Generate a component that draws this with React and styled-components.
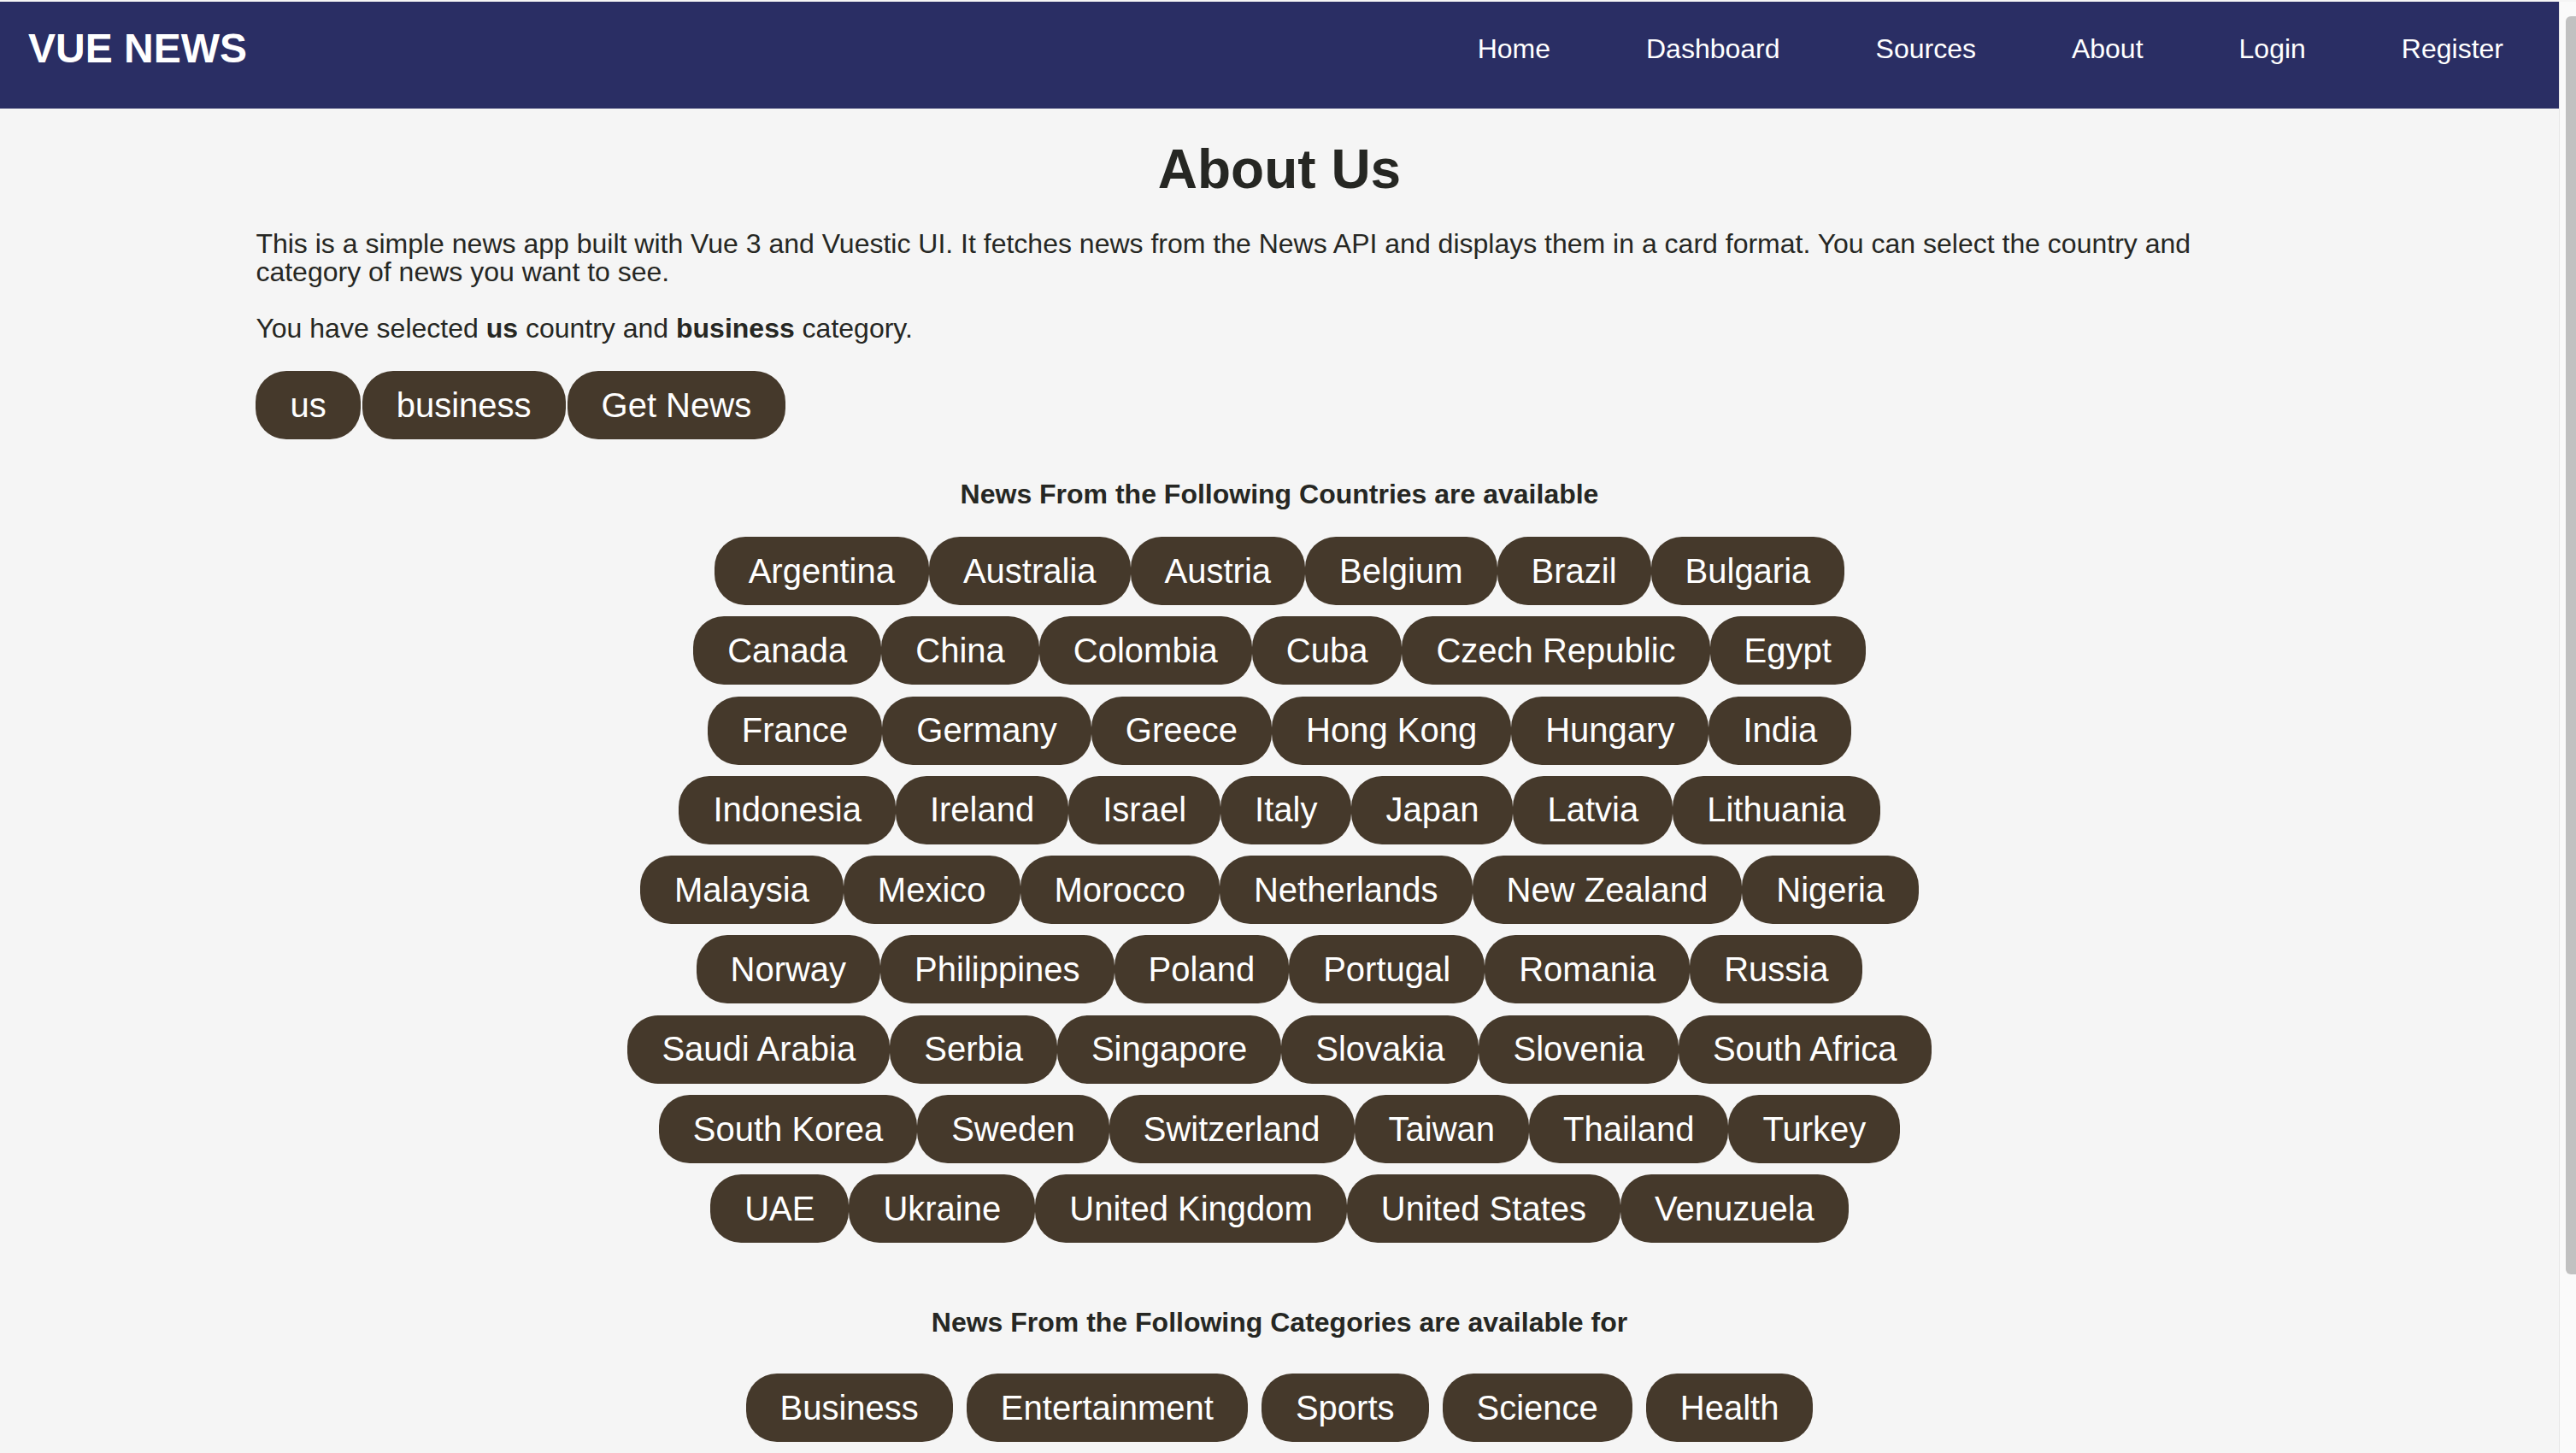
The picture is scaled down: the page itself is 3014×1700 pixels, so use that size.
import React from 'react';
import styled, { createGlobalStyle } from 'styled-components';

const GlobalStyle = createGlobalStyle`
  html {
    background: #f5f5f5;
  }
  body {
    margin: 0;
    padding-top: 2px;
    background: #f5f5f5;
    font-family: "Liberation Sans", Arial, Helvetica, sans-serif;
    color: #262723;
    overflow: hidden;
  }
`;

const Viewport = styled.div`
  display: flex;
  height: calc(100vh - 2px);
  overflow: hidden;
`;

const Page = styled.div`
  flex: 1;
  min-width: 0;
  overflow: hidden;
`;

// window scrollbar, as it shows on the capture
const ScrollRail = styled.div`
  flex: 0 0 20px;
  box-sizing: border-box;
  padding: 17px 0 0 7px;
  background: #fafafa;
  border-left: 1px solid #e6e6e6;
`;

const ScrollThumb = styled.div`
  height: 1472px;
  background: #c1c1c1;
  border-radius: 6px 0 0 6px;
`;

const NavBar = styled.nav`
  display: flex;
  align-items: center;
  justify-content: space-between;
  height: 125px;
  box-sizing: border-box;
  padding: 0 65px 16px 33px;
  background: #2a2e64;
`;

const Brand = styled.div`
  font-size: 48px;
  font-weight: 700;
  line-height: 1;
  color: #fff;
`;

const NavLinks = styled.ul`
  display: flex;
  gap: 112px;
  list-style: none;
  margin: 0;
  padding: 0;
`;

const NavLink = styled.a`
  font-size: 32px;
  line-height: 1;
  color: #fff;
  text-decoration: none;
`;

const Main = styled.main`
  width: 80%;
  margin: 0 auto;
  padding: 39px 0 250px;
`;

const Title = styled.h1`
  margin: 0 0 39px;
  font-size: 64px;
  font-weight: 700;
  line-height: 1;
  text-align: center;
`;

const Text = styled.p`
  margin: 0 0 33px;
  font-size: 32px;
  line-height: 33px;
`;

const PillRow = styled.div`
  display: flex;
  justify-content: ${(p) => (p.$center ? 'center' : 'flex-start')};
  gap: ${(p) => p.$gap || 0}px;
  margin-top: ${(p) => p.$top || 0}px;
`;

const Pill = styled.button`
  display: inline-flex;
  align-items: center;
  height: 80px;
  padding: 0 40px;
  border: none;
  border-radius: 36px;
  background: #45392b;
  color: #fff;
  font-family: inherit;
  font-size: 40px;
  white-space: nowrap;
  cursor: pointer;
`;

const SectionTitle = styled.h4`
  margin: ${(p) => p.$top}px 0 0;
  font-size: 32px;
  font-weight: 700;
  line-height: 1;
  text-align: center;
`;

const ChipGrid = styled.div`
  display: flex;
  flex-direction: column;
  gap: 13.3px;
  margin-top: 34px;
`;

const countryRows = [
  ['Argentina', 'Australia', 'Austria', 'Belgium', 'Brazil', 'Bulgaria'],
  ['Canada', 'China', 'Colombia', 'Cuba', 'Czech Republic', 'Egypt'],
  ['France', 'Germany', 'Greece', 'Hong Kong', 'Hungary', 'India'],
  ['Indonesia', 'Ireland', 'Israel', 'Italy', 'Japan', 'Latvia', 'Lithuania'],
  ['Malaysia', 'Mexico', 'Morocco', 'Netherlands', 'New Zealand', 'Nigeria'],
  ['Norway', 'Philippines', 'Poland', 'Portugal', 'Romania', 'Russia'],
  ['Saudi Arabia', 'Serbia', 'Singapore', 'Slovakia', 'Slovenia', 'South Africa'],
  ['South Korea', 'Sweden', 'Switzerland', 'Taiwan', 'Thailand', 'Turkey'],
  ['UAE', 'Ukraine', 'United Kingdom', 'United States', 'Venuzuela'],
];

const categories = ['Business', 'Entertainment', 'Sports', 'Science', 'Health'];

const links = ['Home', 'Dashboard', 'Sources', 'About', 'Login', 'Register'];

const App = () => {
  return (
    <>
      <GlobalStyle />
      <Viewport>
        <Page>
          <NavBar>
            <Brand>VUE NEWS</Brand>
            <NavLinks>
              {links.map((l) => (
                <li key={l}>
                  <NavLink href="#">{l}</NavLink>
                </li>
              ))}
            </NavLinks>
          </NavBar>
          <Main>
            <Title>About Us</Title>
            <Text>
              This is a simple news app built with Vue 3 and Vuestic UI. It fetches news from the News API and
              displays them in a card format. You can select the country and category of news you want to see.
            </Text>
            <Text>
              You have selected <b>us</b> country and <b>business</b> category.
            </Text>
            <PillRow $top={7} $gap={2}>
              <Pill>us</Pill>
              <Pill>business</Pill>
              <Pill>Get News</Pill>
            </PillRow>

            <SectionTitle $top={48}>News From the Following Countries are available</SectionTitle>
            <ChipGrid>
              {countryRows.map((row, i) => (
                <PillRow key={i} $center>
                  {row.map((c) => (
                    <Pill key={c}>{c}</Pill>
                  ))}
                </PillRow>
              ))}
            </ChipGrid>

            <SectionTitle $top={77}>News From the Following Categories are available for</SectionTitle>
            <PillRow $center $gap={16} $top={44}>
              {categories.map((c) => (
                <Pill key={c}>{c}</Pill>
              ))}
            </PillRow>
          </Main>
        </Page>
        <ScrollRail>
          <ScrollThumb />
        </ScrollRail>
      </Viewport>
    </>
  );
};

export default App;
